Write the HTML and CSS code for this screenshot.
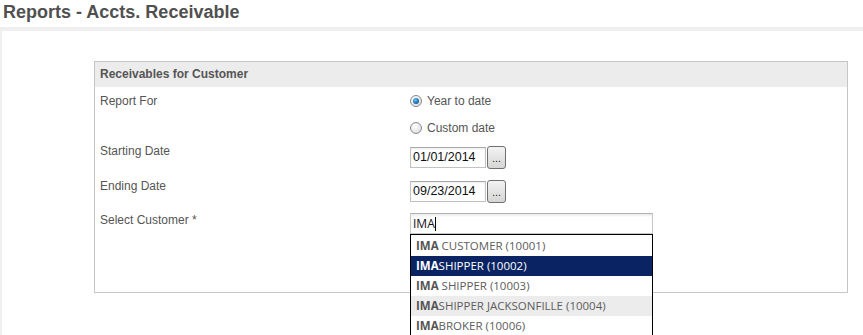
FILE: index.html
```html
<!DOCTYPE html>
<html lang="en">
<head>
    <meta charset="UTF-8">
    <title>Reports - Accts. Receivable</title>
    <link rel="stylesheet" href="styles.css">
</head>
<body>
    <h1 class="page-title">Reports - Accts. Receivable</h1>

    <div class="content">
        <div class="panel">
            <div class="panel-head">Receivables for Customer</div>

            <div class="form">
                <div class="row row-report">
                    <div class="label">Report For</div>
                    <div class="value">
                        <label class="radio-line"><span class="radio checked"></span>Year to date</label>
                    </div>
                </div>
                <div class="row row-custom">
                    <div class="label"></div>
                    <div class="value">
                        <label class="radio-line"><span class="radio"></span>Custom date</label>
                    </div>
                </div>
                <div class="row row-start">
                    <div class="label">Starting Date</div>
                    <div class="value date-field">
                        <div class="date-input">01/01/2014</div>
                        <div class="pick-btn">...</div>
                    </div>
                </div>
                <div class="row row-end">
                    <div class="label">Ending Date</div>
                    <div class="value date-field">
                        <div class="date-input">09/23/2014</div>
                        <div class="pick-btn">...</div>
                    </div>
                </div>
                <div class="row row-customer">
                    <div class="label">Select Customer *</div>
                    <div class="value">
                        <div class="customer-box">
                            <div class="customer-input">IMA<span class="caret"></span></div>
                            <!-- autocomplete results -->
                            <ul class="suggest">
                                <li><b>IMA</b> CUSTOMER (10001)</li>
                                <li class="selected"><b>IMA</b>SHIPPER (10002)</li>
                                <li><b>IMA</b> SHIPPER (10003)</li>
                                <li class="hover"><b>IMA</b>SHIPPER JACKSONFILLE (10004)</li>
                                <li><b>IMA</b>BROKER (10006)</li>
                            </ul>
                        </div>
                    </div>
                </div>
            </div>
        </div>
    </div>
</body>
</html>
```

FILE: styles.css
```css
body {
    margin: 0;
    font-family: "Liberation Sans", Arial, sans-serif;
    color: #555;
    background: #fff;
    overflow: hidden;
}
.page-title {
    margin: 0;
    height: 27px;
    box-sizing: border-box;
    padding: 2px 0 0 3px;
    font-size: 18px;
    font-weight: bold;
    color: #505050;
    line-height: 21px;
}
.content {
    border-top: 4px solid #efefef;
    border-left: 2px solid #efefef;
    padding: 30px 15px 0 92px;
    height: 274px;
}
.panel {
    border: 1px solid #c6c6c6;
    height: 232px;
    box-sizing: border-box;
}
.panel-head {
    background: #ececec;
    height: 25px;
    line-height: 25px;
    padding-left: 5px;
    font-size: 12px;
    font-weight: bold;
    color: #555;
}
.form {
    padding-top: 6px;
}
.row {
    display: grid;
    grid-template-columns: 315px 1fr;
    align-items: start;
}
.label {
    padding-left: 5px;
    font-size: 12px;
    line-height: 14px;
}
.row-report { height: 27px; }
.row-custom { height: 25px; }
.row-start { height: 34px; }
.row-end { height: 32px; }
.row-report .label { padding-top: 1px; }
.row-start .label { margin-top: -1px; }
.row-customer .label { padding-top: 2px; }
.row-customer .value { padding-top: 2px; }

.radio-line {
    display: flex;
    align-items: center;
    gap: 5px;
    font-size: 12px;
    line-height: 16px;
    color: #555;
}
.radio {
    width: 10px;
    height: 10px;
    border-radius: 50%;
    border: 1px solid #8c8c8c;
    background: radial-gradient(circle at 40% 35%, #fff 0, #e6e6e6 60%, #c9c9c9 100%);
    position: relative;
}
.radio.checked::after {
    content: "";
    position: absolute;
    left: 2px;
    top: 2px;
    width: 6px;
    height: 6px;
    border-radius: 50%;
    background: radial-gradient(circle at 40% 35%, #6bc3f5 0, #1a73b8 55%, #0b3d6b 100%);
}

.date-field {
    display: flex;
    align-items: flex-start;
    gap: 1px;
    padding-top: 2px;
}
.date-input {
    width: 76px;
    height: 21px;
    box-sizing: border-box;
    border: 1px solid #c2c2c2;
    border-top-color: #a9a9a9;
    padding: 0 2px;
    font-size: 12.5px;
    line-height: 19px;
    color: #111;
    box-shadow: inset 0 1px 2px rgba(0,0,0,0.08);
}
.pick-btn {
    width: 19px;
    height: 23px;
    margin-top: -1px;
    box-sizing: border-box;
    border: 1px solid #707070;
    border-radius: 3px;
    background: linear-gradient(#f4f4f4, #e4e4e4 50%, #d6d6d6);
    font-size: 11px;
    line-height: 22px;
    text-align: center;
    color: #222;
}

.customer-box {
    position: relative;
    width: 243px;
}
.customer-input {
    height: 21px;
    box-sizing: border-box;
    border: 1px solid #c8c8c8;
    border-top-color: #b0b0b0;
    box-shadow: inset 0 2px 2px rgba(0,0,0,0.07);
    padding-left: 2px;
    font-family: "Open Sans", "Noto Sans", sans-serif;
    font-size: 12px;
    line-height: 19px;
    color: #111;
}
.caret {
    display: inline-block;
    width: 1px;
    height: 14px;
    background: #000;
    vertical-align: -3px;
}
.suggest {
    position: absolute;
    left: 0;
    top: 21px;
    width: 243px;
    box-sizing: border-box;
    margin: 0;
    padding: 1px 0 0;
    list-style: none;
    border: 1px solid #000;
    background: #fff;
    font-family: "Open Sans", "Noto Sans", sans-serif;
    font-size: 11.5px;
    color: #5c5c5c;
}
.suggest li {
    height: 20px;
    line-height: 20px;
    padding-left: 5px;
    white-space: nowrap;
}
.suggest b { color: #555; }
.suggest li.selected {
    background: #0a2463;
    color: #fff;
}
.suggest li.selected b { color: #fff; }
.suggest li.hover { background: #ececec; }
```
